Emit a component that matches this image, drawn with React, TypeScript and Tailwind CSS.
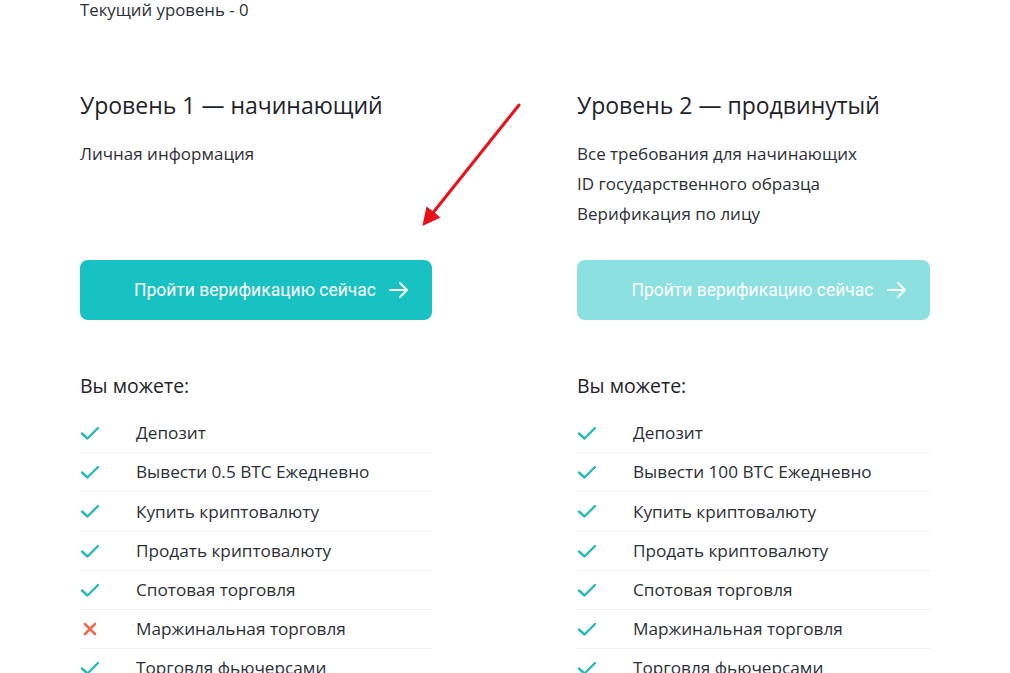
import React from 'react';

type Feature = { label: string; ok: boolean };

const LEVELS: {
  title: string;
  requirements: string[];
  active: boolean;
  features: Feature[];
}[] = [
  {
    title: 'Уровень 1 — начинающий',
    requirements: ['Личная информация'],
    active: true,
    features: [
      { label: 'Депозит', ok: true },
      { label: 'Вывести 0.5 BTC Ежедневно', ok: true },
      { label: 'Купить криптовалюту', ok: true },
      { label: 'Продать криптовалюту', ok: true },
      { label: 'Спотовая торговля', ok: true },
      { label: 'Маржинальная торговля', ok: false },
      { label: 'Торговля фьючерсами', ok: true },
    ],
  },
  {
    title: 'Уровень 2 — продвинутый',
    requirements: ['Все требования для начинающих', 'ID государственного образца', 'Верификация по лицу'],
    active: false,
    features: [
      { label: 'Депозит', ok: true },
      { label: 'Вывести 100 BTC Ежедневно', ok: true },
      { label: 'Купить криптовалюту', ok: true },
      { label: 'Продать криптовалюту', ok: true },
      { label: 'Спотовая торговля', ok: true },
      { label: 'Маржинальная торговля', ok: true },
      { label: 'Торговля фьючерсами', ok: true },
    ],
  },
];

const CheckIcon = () => (
  <svg width="20" height="16" viewBox="0 0 20 16" fill="none">
    <path d="M2 8.5 L7.5 13.5 L18 3" stroke="#27b8b8" strokeWidth="2.4" strokeLinecap="round" strokeLinejoin="round" />
  </svg>
);

const CrossIcon = () => (
  <svg width="20" height="16" viewBox="0 0 20 16" fill="none">
    <path d="M5 3 L15 13 M15 3 L5 13" stroke="#ef6a50" strokeWidth="2.6" strokeLinecap="round" />
  </svg>
);

const ArrowRight = () => (
  <svg width="22" height="18" viewBox="0 0 22 18" fill="none">
    <path d="M2 9 H19 M12 2 L19 9 L12 16" stroke="white" strokeWidth="2" strokeLinecap="round" strokeLinejoin="round" />
  </svg>
);

const App = () => {
  return (
    <div className="relative min-h-screen bg-white text-[#1e2329]" style={{ fontFamily: '"Open Sans", sans-serif' }}>
      <div className="pl-[80px]">
        <p className="text-[16.8px] leading-[20px] text-[#2b2f36]">Текущий уровень - 0</p>

        <div className="mt-[70px] flex gap-[144px]">
          {LEVELS.map((level) => (
            <div key={level.title} className="w-[353px]">
              <h2 className="text-[23px] leading-[30px] text-[#1e2329]">{level.title}</h2>

              {/* requirements block has fixed height so buttons line up */}
              <div className="mt-[19px] h-[90px]">
                {level.requirements.map((r) => (
                  <p key={r} className="text-[17px] leading-[30px] text-[#2b2f36]">{r}</p>
                ))}
              </div>

              <button
                className={
                  level.active
                    ? 'mt-[31px] flex h-[60px] w-[352px] items-center justify-center gap-[12px] rounded-[8px] bg-[#18c2c2] text-[17.5px] text-white'
                    : 'mt-[31px] flex h-[60px] w-[353px] items-center justify-center gap-[12px] rounded-[8px] bg-[#8ce0e0] text-[17.5px] text-white'
                }
                style={{ fontFamily: 'Roboto, sans-serif' }}
              >
                <span className="pl-[32px]">Пройти верификацию сейчас</span>
                <ArrowRight />
              </button>

              <h3 className="mt-[52px] text-[19.5px] leading-[28px] text-[#1e2329]">Вы можете:</h3>

              <ul className="mt-[14px]">
                {level.features.map((f) => (
                  <li key={f.label} className="flex h-[39.2px] items-center border-b border-[#f0f1f2]">
                    <span className="flex w-[56px] items-center">
                      {f.ok ? <CheckIcon /> : <CrossIcon />}
                    </span>
                    <span className="text-[17.2px] text-[#2b2f36]">{f.label}</span>
                  </li>
                ))}
              </ul>
            </div>
          ))}
        </div>
      </div>

      {/* red annotation arrow */}
      <svg className="pointer-events-none absolute left-0 top-0" width="1010" height="673">
        <defs>
          <marker id="head" markerWidth="6" markerHeight="6" refX="3" refY="3" orient="auto">
            <path d="M0 0 L6 3 L0 6 Z" fill="#e8121a" />
          </marker>
        </defs>
        <line x1="519" y1="105" x2="428" y2="219" stroke="#e8121a" strokeWidth="3" strokeLinecap="round" markerEnd="url(#head)" />
      </svg>
    </div>
  );
};

export default App;
